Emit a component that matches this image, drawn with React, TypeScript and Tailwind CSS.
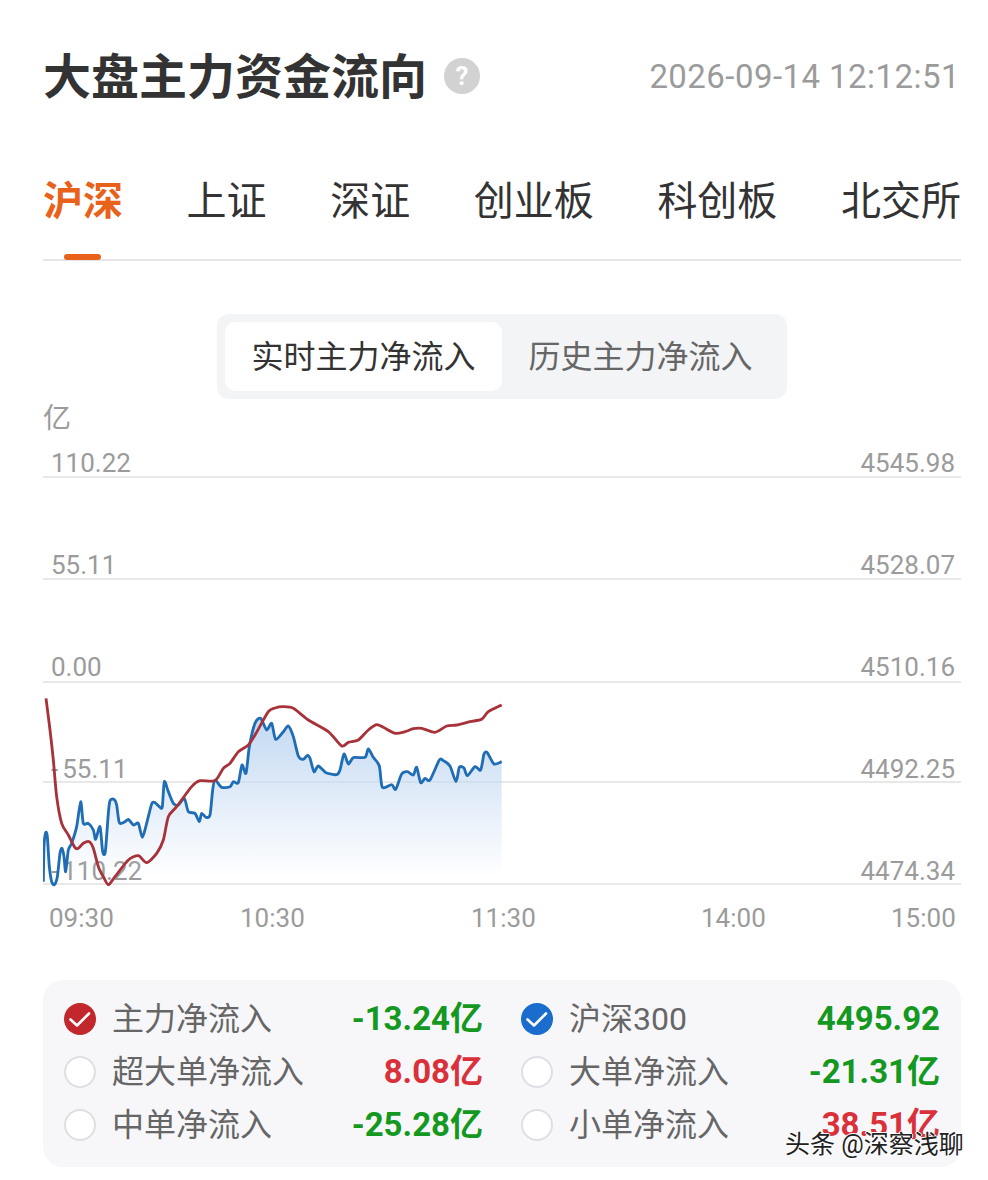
const bluePts = [130,605,132,500,137,458,142,470,148,560,155,605,163,614,172,590,180,520,186,505,192,530,197,575,205,510,215,490,230,440,242,365,250,430,265,430,280,450,287,478,300,440,308,515,316,515,325,400,330,362,342,358,350,375,358,428,375,425,385,418,400,435,415,430,427,472,440,430,455,372,465,368,480,382,487,380,493,305,505,335,520,370,535,375,553,355,565,395,585,400,598,425,605,400,618,412,630,405,638,330,645,300,665,322,690,320,700,305,715,308,726,255,738,280,748,200,765,130,782,115,800,150,815,130,827,178,850,155,865,138,880,170,895,228,910,238,922,226,930,235,942,275,955,258,978,278,1010,284,1020,270,1032,222,1045,252,1060,233,1095,232,1105,207,1120,232,1138,258,1147,322,1175,314,1187,328,1205,282,1222,275,1240,285,1250,262,1262,308,1275,295,1290,300,1318,240,1330,242,1350,258,1368,305,1378,262,1392,264,1402,287,1425,260,1442,270,1452,222,1462,218,1482,252,1505,245];
const redPts = [138,55,150,150,160,240,170,350,185,430,205,465,225,503,235,505,250,490,268,485,280,505,295,560,310,590,325,614,345,590,385,540,415,527,440,548,470,520,490,480,505,410,530,380,575,320,600,302,645,302,670,265,690,250,715,215,745,195,765,165,805,95,825,84,850,80,880,85,925,120,985,155,1025,198,1045,187,1075,180,1105,150,1130,134,1150,142,1185,160,1215,155,1240,146,1265,145,1305,157,1340,138,1370,135,1410,125,1445,118,1465,95,1505,75];

// catmull-rom through the traced points
function smooth(p: number[]) {
  let d = `M${p[0]} ${p[1]}`;
  const n = p.length / 2;
  const at = (i: number) => {
    const k = Math.max(0, Math.min(n - 1, i));
    return [p[k * 2], p[k * 2 + 1]];
  };
  for (let i = 0; i < n - 1; i++) {
    const [x0, y0] = at(i - 1);
    const [x1, y1] = at(i);
    const [x2, y2] = at(i + 1);
    const [x3, y3] = at(i + 2);
    const c1x = x1 + (x2 - x0) / 8;
    const c1y = y1 + (y2 - y0) / 8;
    const c2x = x2 - (x3 - x1) / 8;
    const c2y = y2 - (y3 - y1) / 8;
    d += `C${c1x} ${c1y} ${c2x} ${c2y} ${x2} ${y2}`;
  }
  return d;
}

const tabs = ['沪深', '上证', '深证', '创业板', '科创板', '北交所'];

const grid = [
  { left: '110.22', right: '4545.98', h: 'h-[30px] leading-[26px]' },
  { left: '55.11', right: '4528.07', h: 'h-[102px] leading-[26px]' },
  { left: '0.00', right: '4510.16', h: 'h-[103px] leading-[28px]' },
  { left: '55.11', neg: true, right: '4492.25', h: 'h-[100px] leading-[24px]' },
  { left: '110.22', neg: true, right: '4474.34', h: 'h-[102px] leading-[24px]' },
];

const legend = [
  { label: '主力净流入', value: '-13.24亿', up: false, check: 'red' },
  { label: '沪深300', value: '4495.92', up: false, check: 'blue' },
  { label: '超大单净流入', value: '8.08亿', up: true },
  { label: '大单净流入', value: '-21.31亿', up: false },
  { label: '中单净流入', value: '-25.28亿', up: false },
  { label: '小单净流入', value: '38.51亿', up: true },
];

function Radio({ check }: { check?: string }) {
  if (!check) {
    return <span className="h-[32px] w-[32px] shrink-0 rounded-full border-2 border-[#dedfe2] bg-white" />;
  }
  return (
    <svg viewBox="0 0 32 32" className="h-[32px] w-[32px] shrink-0">
      <circle cx="16" cy="16" r="16" fill={check === 'red' ? '#c1272d' : '#1a6dcc'} />
      <path d="M6.5 16.5l6.5 6L25 10.5" fill="none" stroke="#fff" strokeWidth="2.6" strokeLinecap="round" strokeLinejoin="round" />
    </svg>
  );
}

export default function App() {
  return (
    <div lang="zh-CN" className="relative h-[1180px] overflow-hidden bg-white pl-[43px] pr-[27px] font-['Roboto','Noto_Sans_CJK_SC',sans-serif]">
      <div className="mt-[48px] flex h-[56px] items-center">
        <h1 className="pt-[3px] text-[48px] font-bold leading-[56px] text-[#333333]">大盘主力资金流向</h1>
        <span className="ml-[17px] flex h-[36px] w-[36px] items-center justify-center rounded-full bg-[#d2d2d2] text-[26px] font-bold leading-none text-white">?</span>
        <span className="ml-auto pr-[1px] text-[33px] leading-none tracking-[0.45px] text-[#9b9b9b]">2026-09-14 12:12:51</span>
      </div>

      <div className="mt-[66px] flex h-[91px] justify-between border-b-2 border-[#e6e6e6]">
        {tabs.map((t, i) => (
          <div key={t} className={`relative pt-[1px] text-[40px] leading-[62px] ${i === 0 ? 'font-bold text-[#e8621c]' : 'text-[#333333]'}`}>
            {t}
            {i === 0 && <span className="absolute bottom-[-1px] left-[21px] h-[6px] w-[37px] rounded-full bg-[#e8621c]" />}
          </div>
        ))}
      </div>

      <div className="ml-[174px] mt-[53px] flex h-[85px] w-[570px] rounded-[12px] bg-[#f3f4f6] p-[8px] text-[32px]">
        <div className="flex w-[277px] items-center justify-center rounded-[10px] bg-white text-[#333333]">实时主力净流入</div>
        <div className="flex flex-1 items-center justify-center text-[#666666]">历史主力净流入</div>
      </div>

      <div className="h-[49px] pt-[6px] text-[28px] leading-[28px] text-[#9b9b9b]">亿</div>

      <div className="relative">
        {grid.map((g) => (
          <div key={g.right} className={`flex ${g.h} items-end justify-between border-b-2 border-[#e8e8e8] pl-[8px] pr-[6px] text-[26px] text-[#9b9b9b]`}>
            <span>
              {g.neg && <span className="mr-[4px]">-</span>}
              {g.left}
            </span>
            <span>{g.right}</span>
          </div>
        ))}
        <svg viewBox="129 0 1431 660" className="absolute left-0 top-[232px] h-[220px] w-[477px]">
          <defs>
            <linearGradient id="area" gradientUnits="userSpaceOnUse" x1="0" y1="110" x2="0" y2="590">
              <stop offset="0" stopColor="#c3d9f2" />
              <stop offset="1" stopColor="#c3d9f2" stopOpacity="0" />
            </linearGradient>
          </defs>
          <path d={`${smooth(bluePts)}L1505 610L130 610Z`} fill="url(#area)" />
          <path d={smooth(bluePts)} fill="none" stroke="#1f6db5" strokeWidth="8.5" strokeLinejoin="round" />
          <path d={smooth(redPts)} fill="none" stroke="#a8323a" strokeWidth="8.5" strokeLinejoin="round" />
        </svg>
      </div>

      <div className="mt-[19px] flex pl-[6px] text-[26px] leading-[28px] text-[#9b9b9b]">
        <span className="w-[64px] text-center">09:30</span>
        <span className="ml-[127px] w-[64px] text-center">10:30</span>
        <span className="ml-[167px] w-[64px] text-center">11:30</span>
        <span className="ml-[166px] w-[64px] text-center">14:00</span>
        <span className="ml-[126px] w-[64px] text-center">15:00</span>
      </div>

      <div className="mt-[48px] grid h-[187px] grid-cols-2 content-start gap-x-[38px] rounded-[20px] bg-[#f7f7fa] px-[21px] pt-[12px]">
        {legend.map((l) => (
          <div key={l.label} className="flex h-[53px] items-center">
            <Radio check={l.check} />
            <span className="ml-[16px] text-[32px] text-[#666666]">{l.label}</span>
            <span className={`ml-auto text-[33px] font-bold ${l.up ? 'text-[#d9303a]' : 'text-[#14981f]'}`}>{l.value}</span>
          </div>
        ))}
      </div>

      <div className="absolute left-[785px] top-[1129px] text-[25px] leading-[32px] text-[#222222] [text-shadow:-1px_0_#fff,1px_0_#fff,0_-1px_#fff,0_1px_#fff]">
        头条 @深察浅聊
      </div>
    </div>
  );
}
